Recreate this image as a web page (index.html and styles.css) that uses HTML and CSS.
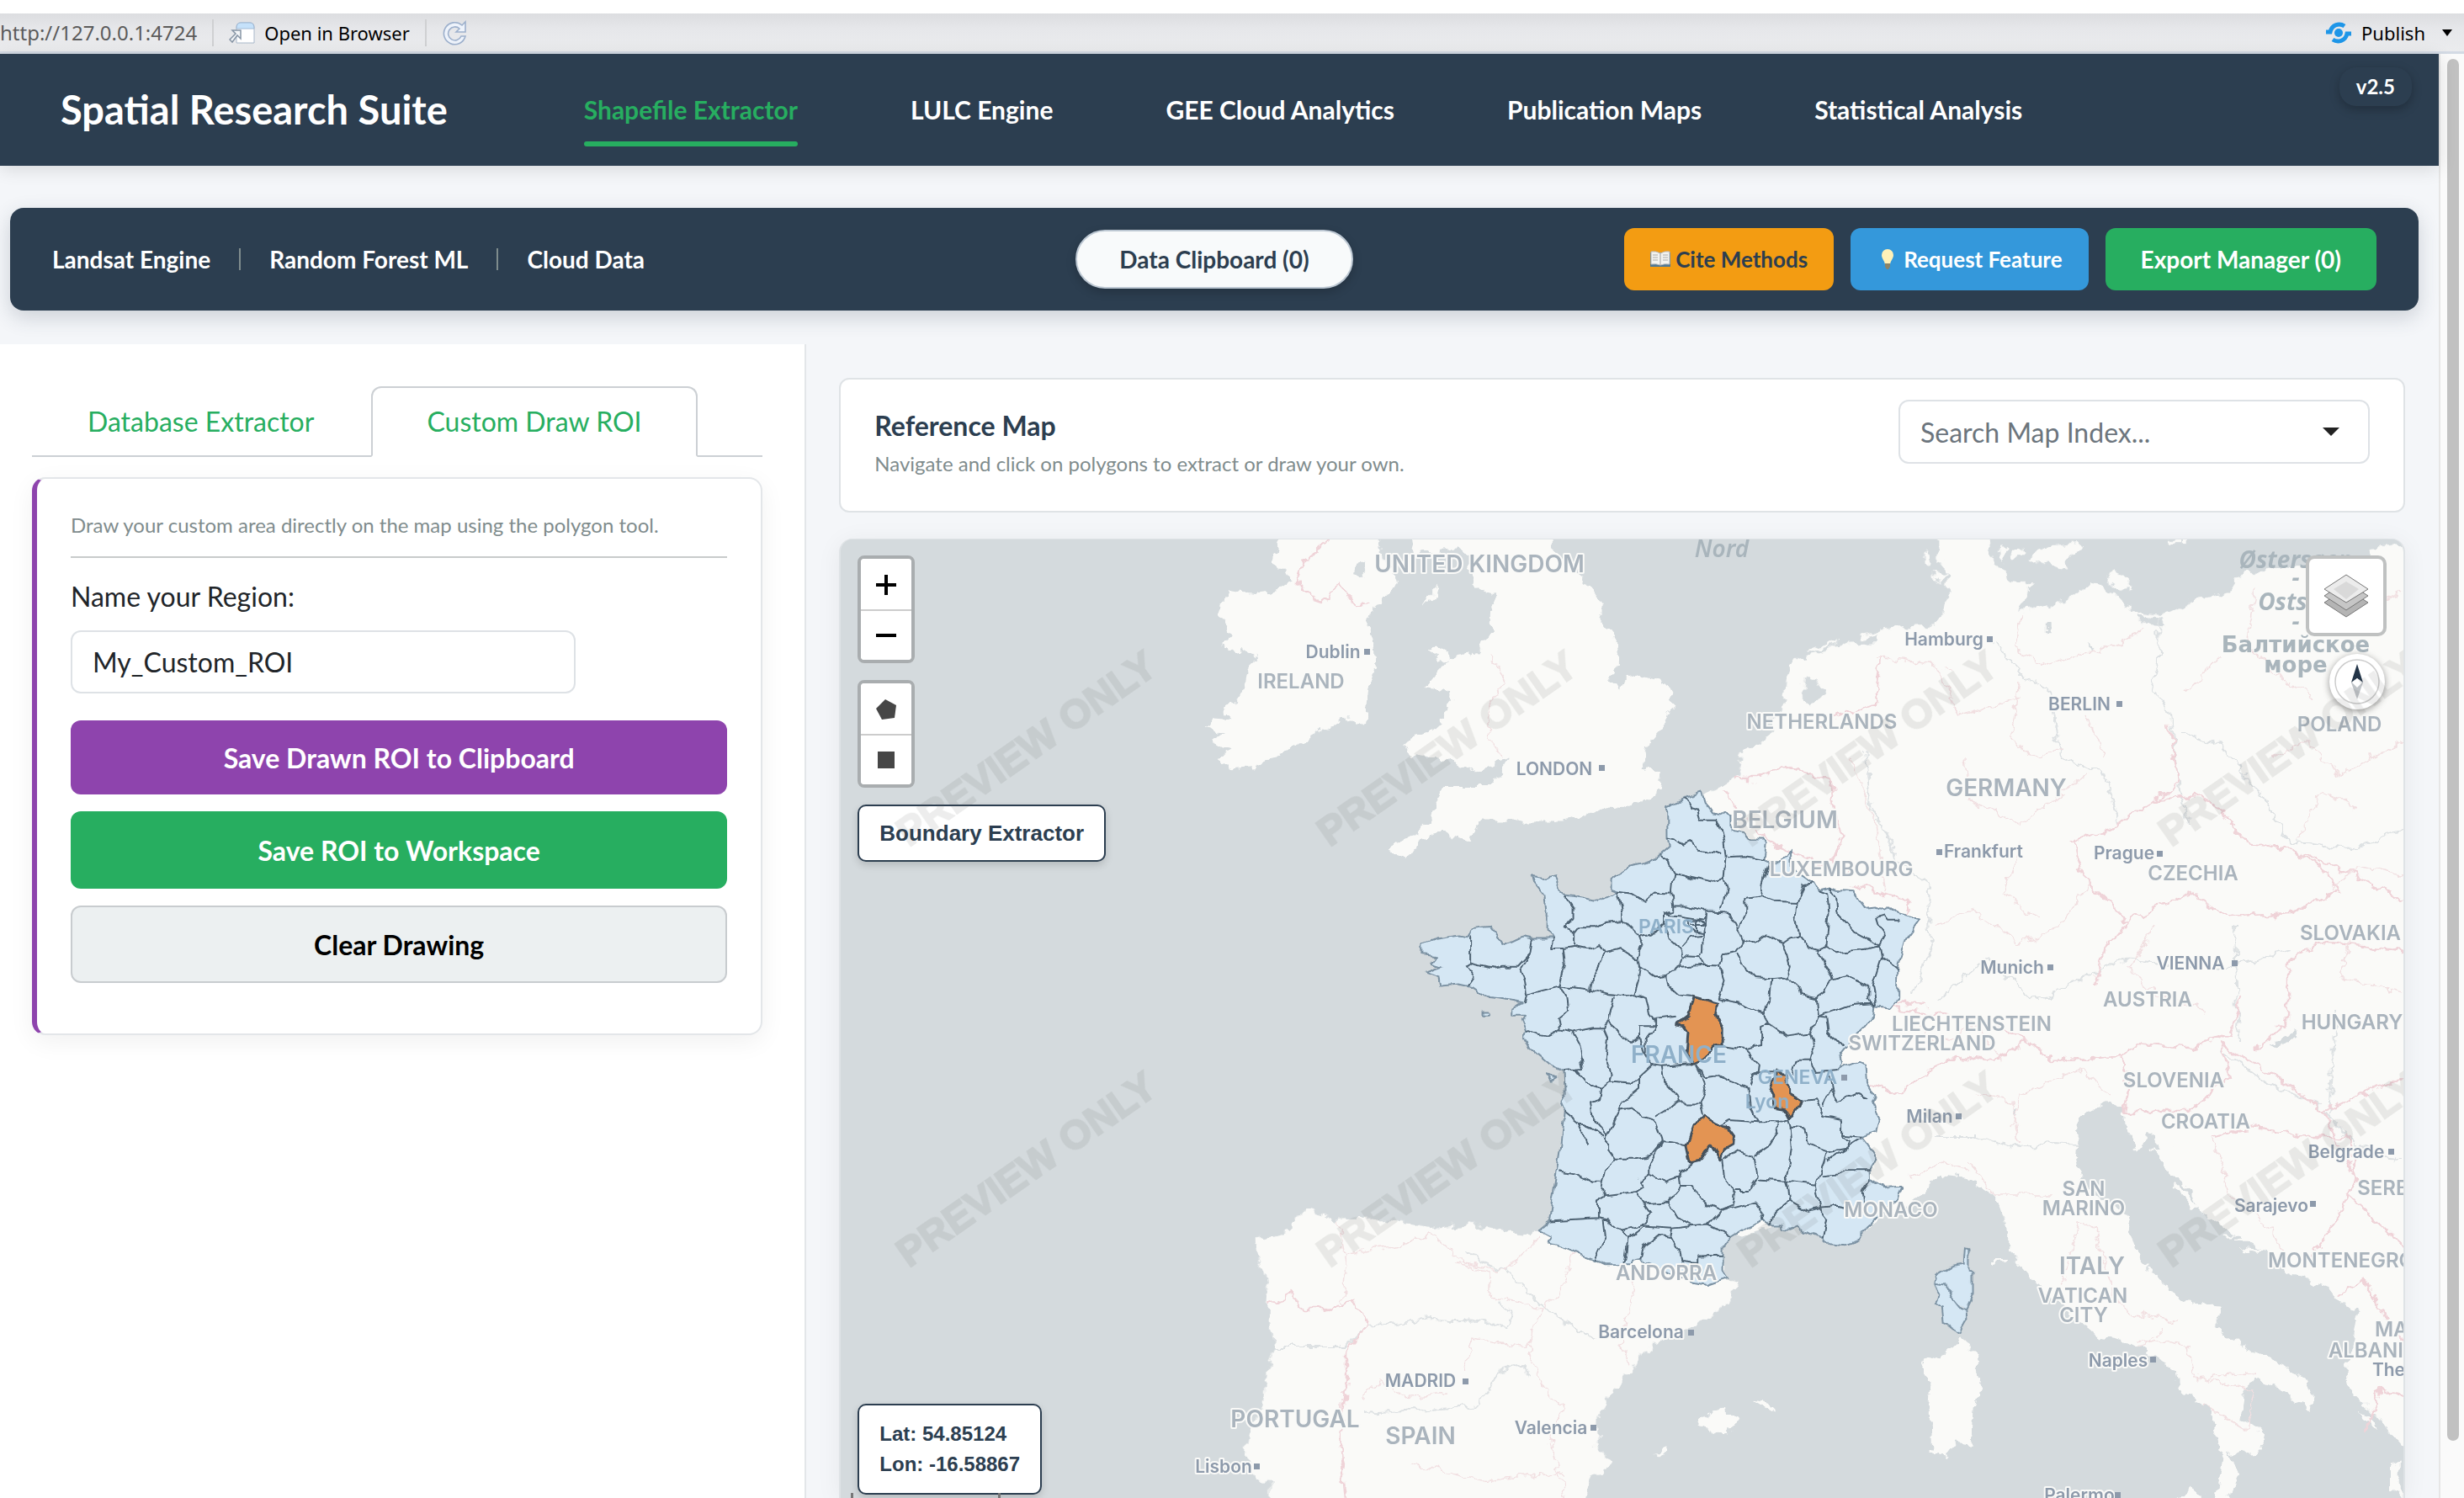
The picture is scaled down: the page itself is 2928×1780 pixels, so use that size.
FILE: index.html
```html
<!DOCTYPE html>
<html lang="en">
<head>
<meta charset="utf-8">
<title>Spatial Research Suite</title>
<link rel="stylesheet" href="styles.css">
</head>
<body>
<div class="strip"></div>
<div class="viewer-bar">
  <span class="viewer-url">http://127.0.0.1:4724</span>
  <span class="divider"></span>
  <button class="tool" type="button">
    <svg width="32" height="26" viewBox="0 0 32 26"><path d="M9 6q0-5 5-5h11q5 0 5 5v19H9V6z" fill="#fff" stroke="#a9b8ca"/><path d="M9 8q0-7 5-7h11q5 0 5 7z" fill="#c5e1fa" stroke="#9fb8d4"/><path d="M1 21l7-7-4-4h10v10l-4-4-6 8z" fill="#f4f6f8" stroke="#8795a5" stroke-width="1.5"/></svg>
    Open in Browser
  </button>
  <span class="divider"></span>
  <button class="tool" type="button" aria-label="Refresh">
    <svg width="30" height="30" viewBox="0 0 30 30"><path d="M28 2v12H17l4-4a8 8 0 1 0 2 9h5A13 13 0 1 1 24 6z" fill="#eef3fb" stroke="#9db0cc" stroke-width="1.6"/></svg>
  </button>
  <button class="tool publish" type="button">
    <svg width="34" height="26" viewBox="0 0 34 26"><circle cx="17" cy="13" r="5" fill="#1e96e8"/><path d="M2 12h5c2-9 11-11 17-7M32 14h-5c-2 9-11 11-17 7" fill="none" stroke="#1e96e8" stroke-width="5"/></svg>
    Publish
    <svg class="caret" width="12" height="8" viewBox="0 0 12 8"><path d="M0 0h12L6 8z"/></svg>
  </button>
</div>

<div class="shell">
  <div class="page">
    <header class="navbar">
      <h1>Spatial Research Suite</h1>
      <nav>
        <a class="active" href="#shapefile">Shapefile Extractor</a>
        <a href="#lulc">LULC Engine</a>
        <a href="#gee">GEE Cloud Analytics</a>
        <a href="#maps">Publication Maps</a>
        <a href="#stats">Statistical Analysis</a>
      </nav>
      <span class="version">v2.5</span>
    </header>

    <section class="ribbon">
      <div class="engines"><span>Landsat Engine</span><i></i><span>Random Forest ML</span><i></i><span>Cloud Data</span></div>
      <button class="pill" type="button">Data Clipboard (0)</button>
      <div class="actions">
        <button class="btn cite" type="button">
          <svg width="24" height="20" viewBox="0 0 24 20"><path d="M0 2h24v17H0z" fill="#4e7896"/><path d="M1 1q6-1 11 2v14q-5-2-11-1zM23 1q-6-1-11 2v14q5-2 11-1z" fill="#f3f3f0" stroke="#b9b9b9"/><path d="M3 5h6M3 8h6M3 11h6M15 5h6M15 8h6M15 11h6" stroke="#aaa"/></svg>
          Cite Methods
        </button>
        <button class="btn request" type="button">
          <svg width="18" height="26" viewBox="0 0 18 26"><path d="M9 1a7 7 0 0 1 7 7c0 4-3 6-4 11H6C5 14 2 12 2 8a7 7 0 0 1 7-7z" fill="#fff1b8"/><path d="M6 18h6v4l-2 3H8l-2-3z" fill="#8b8468"/></svg>
          Request Feature
        </button>
        <button class="btn export" type="button">Export Manager (0)</button>
      </div>
    </section>

    <main class="work">
      <aside class="sidebar">
        <div class="tabs">
          <a href="#database">Database Extractor</a>
          <a class="current" href="#draw">Custom Draw ROI</a>
        </div>
        <form class="card">
          <p class="hint">Draw your custom area directly on the map using the polygon tool.</p>
          <label for="roi">Name your Region:</label>
          <input id="roi" type="text" value="My_Custom_ROI">
          <button class="wide purple" type="button">Save Drawn ROI to Clipboard</button>
          <button class="wide green" type="button">Save ROI to Workspace</button>
          <button class="wide plain" type="button">Clear Drawing</button>
        </form>
      </aside>

      <section class="content">
        <div class="map-head">
          <div>
            <h2>Reference Map</h2>
            <p>Navigate and click on polygons to extract or draw your own.</p>
          </div>
          <div class="search">
            <input type="text" placeholder="Search Map Index..." aria-label="Search Map Index">
            <svg width="20" height="10" viewBox="0 0 20 10"><path d="M0 0h20L10 10z" fill="#222"/></svg>
          </div>
        </div>

        <div class="map">
          <svg class="tiles" viewBox="999 641 1857 1139" preserveAspectRatio="xMinYMin slice">
            <defs>
              <filter id="coast" filterUnits="userSpaceOnUse" x="980" y="620" width="1900" height="1180">
                <feTurbulence type="fractalNoise" baseFrequency="0.07" numOctaves="3" seed="4"/>
                <feDisplacementMap in="SourceGraphic" scale="16" xChannelSelector="R" yChannelSelector="G"/>
              </filter>
              <filter id="edge" filterUnits="userSpaceOnUse" x="980" y="620" width="1900" height="1180">
                <feTurbulence type="fractalNoise" baseFrequency="0.06" numOctaves="2" seed="9"/>
                <feDisplacementMap in="SourceGraphic" scale="10" xChannelSelector="R" yChannelSelector="G"/>
              </filter>
            </defs>
            <rect x="980" y="620" width="1900" height="2000" fill="#d4dadd"/>
            <g filter="url(#coast)">
              <g class="land" transform="translate(980 420) scale(.63776 .41458)">
                <path d="M858 500L1030 500 1040 590 1065 640 1050 690 1020 730 1012 770 1022 820 1027 900 1012 960 1005 1065 975 1050 935 1075 890 1110 850 1150 800 1185 755 1190 730 1160 755 1140 720 1110 745 1090 710 1070 720 1045 760 1050 740 1020 780 980 790 900 810 870 740 840 760 810 735 740 750 680 800 690 845 680 870 650 860 620 830 600z"/>
                <path d="M1145 660L1140 690 1118 720 1125 690z"/>
                <path d="M1090 500L1355 500 1360 580 1410 640 1445 710 1445 760 1465 800 1480 860 1480 900 1460 930 1485 960 1490 930 1516 922 1561 940 1581 1000 1571 1050 1536 1110 1525 1180 1556 1210 1551 1260 1486 1305 1450 1300 1420 1320 1380 1340 1280 1340 1225 1340 1200 1400 1150 1370 1110 1390 1085 1450 1050 1430 1065 1400 1100 1380 1130 1340 1135 1290 1155 1240 1240 1240 1280 1150 1215 1205 1180 1170 1090 1150 1080 1115 1130 1080 1165 1030 1170 980 1120 955 1150 900 1165 870 1220 855 1240 800 1240 740 1260 700 1225 690 1205 640 1200 590 1180 560 1100 575z"/>
                <path d="M1125 850L1155 845 1165 875 1140 890zM1345 1325L1365 1315 1380 1325 1362 1342z"/>
                <path class="water" d="M990 600L1005 595 1010 620 1000 640 988 635z"/>
              </g>
              <g class="land" transform="translate(1928 420) scale(.63776 .41458)">
                <path d="M590 560L590 490 680 490 690 600 720 650 760 660 755 700 740 740 790 730 840 700 870 650 920 690 950 740 1000 750 1060 710 1130 680 1145 640 1170 625 1280 610 1395 590 1395 555 1500 540 1500 2000 100 2000 150 1260 215 1210 220 1160 270 1100 300 1000 310 890 360 860 400 835 475 830 480 790 580 780 600 730 610 640 590 600z"/>
                <path d="M760 590L790 550 850 540 860 555 835 580 820 620 790 605zM915 620L940 640 945 670 925 680 905 655zM1020 533h30v10h-30zM700 545l15 20-5 40-8-20zM725 560l16-10 6 20-14 20z"/>
                <path d="M345 850L400 822 402 828 350 858zM440 810L525 778 526 784 445 818zM562 570L575 575 572 610 562 600zM575 625L605 630 600 655 585 650zM215 1165L245 1150 260 1180 225 1185z"/>
                <path class="water" d="M340 925L370 950 375 970 350 1020 335 990zM960 750L1005 760 1010 780 970 775zM790 770l6 0 0 36-6 0zM870 830l10 10-5 14z"/>
              </g>
              <g class="land" transform="translate(980 1200) scale(.63776 .36997)">
                <path d="M865 680L900 640 935 660 950 675 1050 670 1130 700 1200 690 1300 720 1350 700 1568 820 1700 870 1686 940 1636 1000 1526 1090 1510 1150 1490 1180 1440 1300 1440 1400 1470 1450 1430 1500 1410 1600 830 1600 830 1510 800 1510 785 1440 790 1360 815 1290 820 1200 840 1080 825 960 830 900 805 780 800 740 865 710z"/>
              </g>
              <g class="land" transform="translate(1928 1200) scale(.63776 .36997)">
                <path d="M0 -20L1500 -20 1500 1430 1450 1400 1410 1310 1355 1220 1350 1150 1370 960 1335 940 1310 890 1240 840 1200 780 1120 700 1080 650 1060 580 1010 500 990 420 985 400 975 440 960 455 940 390 935 320 905 295 850 345 845 480 860 570 940 660 965 800 1020 900 1060 945 1120 950 1105 990 1120 1050 1200 1110 1275 1190 1287 1240 1280 1290 1240 1230 1180 1180 1155 1240 1150 1310 1190 1350 1195 1420 1130 1430 1150 1490 1120 1600 1100 1600 1120 1440 1095 1280 1070 1255 1035 1215 1030 1160 955 1070 890 1050 835 980 760 860 720 780 720 720 695 600 640 540 590 530 550 610 510 640 420 740 300 690 180 740 195 900 150 960 0 700z"/>
                <path d="M630 1060L655 1090 668 1190 655 1280 650 1395 620 1385 600 1435 575 1420 570 1290 575 1200 555 1130 600 1110zM190 1275L215 1310 190 1375 140 1325zM245 1255L275 1265 275 1285zM80 1405L85 1420 60 1440zM1020 1590L1060 1540 1080 1560 1080 1590zM690 800h25v10h-25zM1375 1295L1390 1300 1405 1350 1385 1330zM1430 1460L1450 1450 1450 1560 1430 1540z"/>
                <path d="M985 450L1000 440 1060 540 1050 545zM1025 560L1040 560 1080 640 1070 645zM1010 410l12 10 8 50-14-30zM1120 720h50v6h-50zM1140 740h60v8h-60zM1150 765l60 6 0 10-60-8z"/>
                <path class="water" d="M1205 115L1255 62 1262 72 1215 122zM725 320l8-10 0 30-8-6z"/>
              </g>
              <g class="rivers">
                <path d="M2372 765L2400 800 2436 822 2450 900 2500 920 2520 980"/><path d="M2564 735L2565 780 2556 820 2580 850 2585 900 2600 980"/><path d="M2590 870L2640 885 2690 950 2720 1000 2790 1010 2856 985"/><path d="M2215 895L2225 960 2260 1030 2290 1050 2295 1120 2275 1180"/><path d="M2300 1350L2350 1350 2400 1365 2440 1358 2470 1360"/><path d="M1627 1575L1700 1568 1760 1570 1790 1580 1800 1560 1780 1545"/><path d="M1740 1490L1790 1510 1840 1560 1895 1590"/><path d="M1515 1600L1600 1600 1625 1575"/><path d="M1620 1680L1700 1675 1760 1670 1780 1630 1810 1620 1820 1640"/><path d="M2640 1250L2700 1290 2750 1310 2800 1360 2850 1380"/><path d="M2300 1190L2360 1140 2420 1190 2520 1140 2640 1150 2720 1130"/><path d="M2656 1100L2660 1240M2769 1330L2775 1200"/>
              </g>
              <g class="borders">
                <path class="strong" d="M1575 641L1550 670 1540 690 1560 710 1578 716 1590 692 1610 720 1626 718"/><path class="strong" d="M1508 1550L1535 1538 1545 1555 1575 1555 1610 1548 1625 1575 1600 1605 1600 1640 1592 1720 1600 1780"/><path class="strong" d="M2060 925L2090 925 2120 910 2150 920 2175 925 2180 960 2190 1000 2175 1020 2200 1040"/><path class="strong" d="M2160 860L2230 835 2235 780"/><path class="strong" d="M2050 940L2085 985 2120 1010 2170 1030 2185 1000"/><path class="strong" d="M2200 1050L2230 1060 2270 1070 2250 1130 2225 1190 2290 1195"/><path class="strong" d="M2577 860L2590 930 2560 950 2510 985 2460 1000 2480 1050 2530 1095 2500 1130 2490 1170"/><path class="strong" d="M2560 950L2620 945 2670 1000 2720 1010 2760 1030 2780 1060 2720 1085 2650 1090 2600 1060 2530 1095"/><path class="strong" d="M2225 1190L2260 1200 2330 1210 2400 1230 2440 1260 2520 1255 2540 1240 2600 1245 2650 1230 2665 1180"/><path class="strong" d="M2220 1290L2260 1300 2290 1270 2330 1255 2370 1260 2410 1235"/><path class="strong" d="M2520 1255L2530 1290 2525 1320 2600 1320 2650 1280 2640 1240"/><path class="strong" d="M2630 1350L2680 1340 2740 1350 2790 1350 2800 1400 2780 1440 2760 1480 2730 1500"/><path class="strong" d="M2640 1240L2720 1290 2760 1320 2856 1280M2760 1320L2800 1400 2790 1420 2856 1480"/><path class="strong" d="M2780 1540L2810 1520 2830 1560 2856 1600M2810 1700L2830 1650 2856 1660"/><path class="strong" d="M2720 1010L2780 1030 2856 1070M2680 1250L2720 1210 2720 1140 2760 1120 2856 1130"/>
                <path d="M1770 780L1790 810 1768 840 1770 880 1785 900"/><path d="M1600 1490L1670 1480 1700 1465 1740 1500 1790 1510 1830 1470"/><path d="M1590 1450L1600 1500 1595 1550"/><path d="M1730 1500L1770 1510 1770 1540 1830 1555 1815 1600 1750 1590 1740 1630"/><path d="M1875 1480L1850 1540 1830 1555M1942 1520L1925 1600 1940 1620M1815 1600L1840 1660 1860 1670 1840 1700 1860 1780M1680 1740L1760 1760 1860 1750M1620 1660L1640 1640 1670 1660 1720 1655"/><path d="M2305 790L2320 800M2400 730L2395 770 2430 790 2500 770 2550 750M2230 780L2300 790 2330 850 2400 830M2200 900L2230 980 2240 1060M2335 900L2340 950 2400 980 2480 920M2400 810L2390 880 2420 900 2450 890"/><path d="M2480 850L2500 900M2600 820L2640 780M2680 700L2670 760 2700 800 2750 830M2700 900L2740 880 2780 920 2856 880M2730 1000L2760 940 2800 960"/><path d="M2300 1100L2340 1080 2400 1120 2450 1100 2480 1050M2560 1100L2530 1150 2560 1180 2620 1200M2400 1000L2380 1060 2420 1090"/><path d="M2270 1210L2300 1240 2350 1220 2380 1260M2350 1300L2390 1310 2400 1360M2270 1400L2310 1380 2340 1390M2390 1340L2400 1300 2470 1270 2510 1300M2340 1380L2370 1420 2440 1420"/><path d="M2450 1530L2470 1450 2490 1460 2500 1500 2510 1540 2530 1560 2590 1570M2540 1590L2600 1600 2610 1640 2680 1630M2540 1600L2570 1580M2620 1640L2680 1650 2670 1700 2620 1670"/><path d="M2630 1350L2650 1420 2700 1460 2720 1500M2800 1100L2780 1160 2856 1180M2856 700L2830 720M2770 1060L2800 1030 2856 1040"/>
              </g>
            </g>
            <g filter="url(#edge)">
              <g class="depts" transform="translate(1640 900) scale(.44643 .41454)">
                <path class="fr" d="M764 138L812 116 858 100 866 130 885 160 900 165 922 155 935 170 935 210 970 215 985 235 1020 235 1030 245 1025 292 1035 300 1065 300 1085 290 1095 265 1097 320 1120 335 1155 360 1165 378 1195 370 1215 378 1260 382 1275 410 1290 432 1320 428 1345 438 1362 430 1382 452 1436 467 1400 520 1378 605 1378 690 1355 718 1318 712 1315 740 1285 780 1255 810 1225 850 1230 880 1222 895 1240 885 1270 873 1293 880 1297 930 1318 970 1310 990 1330 1040 1322 1075 1280 1090 1295 1110 1320 1150 1305 1180 1306 1210 1345 1235 1386 1232 1365 1280 1310 1330 1280 1360 1280 1385 1240 1400 1190 1395 1180 1380 1130 1360 1115 1345 1095 1355 1070 1353 1068 1340 1030 1340 1020 1328 970 1350 932 1375 913 1405 913 1470 925 1490 870 1510 820 1500 780 1480 740 1465 700 1450 690 1435 670 1440 670 1455 600 1455 570 1440 535 1425 490 1405 450 1390 455 1375 420 1355 450 1328 470 1185 478 1130 490 1015 478 985 490 960 487 900 450 880 400 835 385 800 390 785 378 755 385 740 350 740 350 720 380 705 330 695 290 690 250 660 210 650 160 655 155 630 120 617 165 600 135 590 150 570 115 565 115 535 150 520 215 510 235 515 245 490 290 485 330 540 380 515 405 520 460 520 445 495 445 450 440 400 410 360 405 340 430 345 465 338 478 380 495 395 540 402 580 412 632 385 615 378 615 350 665 312 720 298 745 278 770 255 765 228z"/>
                <path d="M812 116L825 145 845 152 852 178 892 178 905 200 915 240 920 285M765 228L785 232 808 250 828 240 848 265 885 270 910 278M925 285L970 283 1025 292M745 278L765 295 780 330 840 345 880 355 915 342 920 285M780 330L775 385 780 428 820 428 860 440 918 442M915 342L922 380 907 435M632 385L670 390 705 412 735 385 775 388M632 385L648 468 600 472 575 488 530 488M490 395L512 430 512 455 490 490 520 502 530 488M520 502L520 540M648 468L690 512 720 505 755 475 755 450 780 440 780 428M755 475L770 520 800 548 805 570M755 450L800 455 860 465 867 445M867 445L862 510 830 515 805 545M820 470L845 465 865 480 860 505 835 500 820 485zM825 480h36M840 465v40M862 510L860 560 850 575 805 572M918 442L945 475 965 525 945 558 912 565 905 597 860 595 850 575M950 495L975 450 975 405 1015 398M1015 398L1018 360 1035 300M1015 398L1050 412 1110 415M1110 415L1125 365 1155 360M965 525L1000 535 1030 510 1075 530 1095 515 1115 510 1105 470 1110 415M1165 380L1190 390 1195 450 1188 545M1195 370L1212 400 1215 445 1270 505 1330 540M1115 510L1140 545 1170 555 1188 545 1215 558 1300 548 1330 540M1330 540L1335 570 1378 605M1330 540L1345 510 1325 480 1320 455 1345 450 1355 465 1378 465M1335 570L1310 655 1320 712M1170 555L1185 600 1205 635 1240 625 1300 655 1300 695 1318 712M1075 530L1085 560 1095 600 1085 630 1040 635 1000 632 970 600 950 560M1085 630L1115 660 1120 680 1160 690 1185 670 1205 635M1160 690L1165 742 1225 720 1250 710 1315 705M1040 635L1035 700 1020 732 1030 762 1080 800 1145 790 1165 742M905 597L915 640 900 690 950 700 985 720 1020 732M1165 742L1190 745 1195 790 1230 830M1145 790L1155 850 1150 870 1105 870 1095 910M1150 870L1165 900 1220 895M1030 762L1015 770 1015 825 970 835 912 825M970 835L1010 880 1008 900 990 910M760 625L765 655 790 680 830 685M860 595L800 600 760 625 730 628 690 600 685 570 700 540 690 512M805 572L800 600M520 540L555 548 585 535 598 560 640 548 685 580M598 560L585 590 565 630 560 665 610 680 640 685 675 678 685 640 690 600M405 520L400 560 375 605 385 640 390 680M240 515L240 590 300 605 325 600 365 600 400 560M240 590L225 597 250 632 235 655M460 520L455 545 490 545 495 600 480 655 390 680 385 705M490 545L520 540M480 655L560 665M480 655L495 685 500 725 475 745 482 780 445 800 420 795 390 785M482 780L510 788 570 775 595 775 608 760 615 720 625 690M510 788L530 830 540 895 487 900M595 775L605 800 600 860 615 910 610 930M525 898L550 930 590 945 610 930M608 760L645 795 665 820 690 800 690 770M690 800L700 845 720 880M690 770L735 770 735 752 790 745M675 678L710 690 720 740 735 760M735 770L705 810 705 850M720 880L690 910 690 950 650 985 640 1010 605 1080M610 930L670 935 690 920M590 945L585 980 560 990 565 1030 605 1080M720 880L750 885 830 878M750 885L755 930 790 970 795 990 735 1030M838 878L860 925 865 950 850 990 795 990M850 990L858 1030M865 915L900 910 935 930 980 950 985 1000 1005 1045 930 1040 905 1055M838 878L865 915M985 940L995 905 1050 905M640 1010L665 1005 700 1030 730 1040 750 1100 720 1140 680 1150 625 1150 605 1120 605 1080M750 1100L785 1105 815 1110M750 1100L715 1170 715 1195 760 1215 800 1200M625 1150L600 1180 590 1240 605 1255M478 1185L520 1195 565 1220 590 1220M450 1328L580 1320 580 1270 605 1255 680 1245 700 1230 690 1215 715 1195M580 1320L605 1325 640 1355 700 1340 720 1310 700 1280 680 1245M595 1325L600 1370 570 1440M640 1355L660 1380 650 1455M690 1435L700 1400 740 1370 775 1375 780 1350M660 1380L700 1345 780 1350 820 1345 870 1340M700 1280L765 1275 800 1230 830 1230 870 1280 910 1300M765 1275L790 1320 830 1340M800 1230L795 1190 830 1160M910 1150L915 1200 945 1250 940 1285 905 1300 870 1340 935 1370M910 1300L1000 1275 1025 1310 1020 1328M915 1150L950 1125 995 1140 1005 1200 980 1240 945 1240M775 1375L800 1420 805 1445 845 1450 845 1432 913 1430M1055 1045L1060 1075 1040 1110 1000 1140M1005 1045L1060 1045 1085 1035 1090 1060 1095 1120 1080 1215M1005 1210L1080 1215 1090 1270 1050 1310 1030 1340M1080 1215L1120 1220 1160 1225 1170 1290 1190 1320 1180 1380M1090 1270L1140 1300 1170 1290M1090 1060L1130 1065 1140 1110 1190 1130 1175 1180 1160 1225M1190 1130L1245 1120 1250 1100 1230 1090 1230 1040 1180 1030 1160 980 1120 985M1190 1155L1280 1095M1175 1200L1220 1195 1240 1180 1305 1180M1200 950L1180 1000M1195 910L1200 950 1220 985 1265 965 1297 980M1230 1085L1280 1090M1170 1290L1215 1285 1290 1300 1285 1245 1306 1210M490 1015L530 1050 550 1110M530 1050L600 1085"/>
                <path class="pick" d="M833 686L865 695 900 705 895 735 912 775 912 822 888 832 865 860 830 878 815 855 820 790 805 768 790 765 820 740 830 710zM1050 902L1078 905 1080 925 1090 940 1090 965 1125 988 1120 1005 1100 1010 1088 1030 1078 1010 1050 1005 1050 970 1038 945zM865 1030L885 1042 910 1058 925 1060 942 1085 940 1110 915 1125 905 1155 880 1110 855 1150 825 1158 815 1112 835 1050 860 1040z"/>
                <path class="fr" d="M270 730h18v10h-18zM445 905l24 12-10 6z"/>
              </g>
              <g class="depts" transform="translate(1928 1200) scale(.63776 .36997)">
                <path class="fr" d="M638 765L645 768 645 840 653 850 653 915 640 960 642 995 628 1038 600 1010 597 960 583 945 590 915 582 880 585 850 615 820 636 815zM582 880L605 885 612 915 630 955 640 960"/>
              </g>
            </g>
            <g class="country">
              <text x="1758" y="680" class="l">UNITED KINGDOM</text><text x="1546" y="818">IRELAND</text><text x="2165" y="866">NETHERLANDS</text><text x="2780" y="869">POLAND</text><text x="2384" y="946" class="l">GERMANY</text><text x="2121" y="984" class="l">BELGIUM</text><text x="2606" y="1046">CZECHIA</text><text x="2188" y="1041">LUXEMBOURG</text><text x="2793" y="1117">SLOVAKIA</text><text x="2552" y="1196">AUSTRIA</text><text x="2343" y="1225">LIECHTENSTEIN</text><text x="2284" y="1248">SWITZERLAND</text><text x="2795" y="1223">HUNGARY</text><text x="2583" y="1292">SLOVENIA</text><text x="2621" y="1341">CROATIA</text><text x="2844" y="1420">SERBIA</text><text x="2476" y="1421">SAN</text><text x="2476" y="1444">MARINO</text><text x="2247" y="1446">MONACO</text><text x="2486" y="1514" class="l">ITALY</text><text x="2475" y="1548">VATICAN</text><text x="2476" y="1571">CITY</text><text x="2782" y="1506">MONTENEGRO</text><text x="2866" y="1588">MACED</text><text x="2820" y="1613">ALBANIA</text><text x="1539" y="1696" class="l">PORTUGAL</text><text x="1688" y="1716" class="l">SPAIN</text><text x="1980" y="1521">ANDORRA</text>
              <g class="under"><text x="1995" y="1263" class="l">FRANCE</text></g>
            </g>
            <g class="city">
              <text x="1584" y="782">Dublin</text><text x="1847" y="921">LONDON</text><text x="2310" y="767">Hamburg</text><text x="2471" y="844">BERLIN</text><text x="2357" y="1019">Frankfurt</text><text x="2524" y="1021">Prague</text><text x="2391" y="1157">Munich</text><text x="2603" y="1152">VIENNA</text><text x="2293" y="1334">Milan</text><text x="2788" y="1376">Belgrade</text><text x="2699" y="1440">Sarajevo</text><text x="2517" y="1624">Naples</text><text x="2471" y="1784">Palermo</text><text x="1688" y="1648">MADRID</text><text x="1843" y="1704">Valencia</text><text x="1454" y="1750">Lisbon</text><text x="1950" y="1590">Barcelona</text><text x="2850" y="1635">Thess</text>
              <g class="under"><text x="1980" y="1109">PARIS</text><text x="2100" y="1317">Lyon</text><text x="2136" y="1288">GENEVA</text></g>
              <path d="M1621 771h7v7h-7zM1900 909h7v7h-7zM2361 756h7v7h-7zM2515 833h7v7h-7zM2301 1009h7v7h-7zM2563 1011h7v7h-7zM2433 1146h7v7h-7zM2652 1141h7v7h-7zM2324 1323h7v7h-7zM2838 1365h7v7h-7zM2745 1427h7v7h-7zM2555 1612h7v7h-7zM2513 1773h7v7h-7zM1738 1638h7v7h-7zM1890 1693h7v7h-7zM1490 1739h7v7h-7zM2006 1580h7v7h-7zM2188 1277h7v7h-7z"/>
            </g>
            <g class="sea"><text class="north" x="2046" y="662">Nord</text><text x="2728" y="675">Østersøen</text><text x="2728" y="696">-</text><text x="2728" y="725">Ostsee</text><text x="2728" y="748">-</text><text class="cyr" x="2728" y="775">Балтийское</text><text class="cyr" x="2728" y="799">море</text></g>
          </svg>

          <div class="zoomer"><button type="button" aria-label="Zoom in"><svg width="26" height="26" viewBox="0 0 26 26"><path d="M13 1v24M1 13h24" stroke="#000" stroke-width="4"/></svg></button><button type="button" aria-label="Zoom out"><svg width="26" height="26" viewBox="0 0 26 26"><path d="M1 13h24" stroke="#000" stroke-width="4"/></svg></button></div>
          <div class="zoomer draw"><button type="button" aria-label="Draw polygon"><svg width="26" height="26" viewBox="0 0 26 26"><path d="M12 1l13 7-2 15-15 2L1 12z" fill="#464646"/></svg></button><button type="button" aria-label="Draw rectangle"><svg width="26" height="26" viewBox="0 0 26 26"><path d="M3 3h20v20H3z" fill="#464646"/></svg></button></div>
          <div class="tag">Boundary Extractor</div>
          <div class="tag coords">Lat: 54.85124<br>Lon: -16.58867</div>
          <div class="scale"></div>
          <button class="layers" type="button" aria-label="Layers"><svg width="54" height="52" viewBox="0 0 54 52"><g stroke="#777" stroke-width="1"><path d="M1 34L27 17 53 34 27 51z" fill="#b4b4b4"/><path d="M1 26L27 9 53 26 27 43z" fill="#c6c6c6"/><path d="M1 18L27 1 53 18 27 34z" fill="#ececec"/></g><path d="M12 18L27 9 42 18 27 30z" fill="#d9d9d9"/></svg></button>
          <div class="compass"><svg width="66" height="66" viewBox="0 0 66 66"><circle cx="33" cy="33" r="26" fill="#fff" stroke="#ccc" stroke-width="1.5"/><path d="M33 12l7 22-7-5-7 5z" fill="#233548"/><path d="M33 54l7-20-7-5-7 5z" fill="#bfc3c7"/><path d="M33 29l6 5-6 6-6-6z" fill="#fff"/></svg></div>
          <svg class="watermark" viewBox="999 641 1857 1139" preserveAspectRatio="xMinYMin slice">
            <g><text transform="translate(1080 1007) rotate(-35)">PREVIEW ONLY</text><text transform="translate(1580 1007) rotate(-35)">PREVIEW ONLY</text><text transform="translate(2080 1007) rotate(-35)">PREVIEW ONLY</text><text transform="translate(2580 1007) rotate(-35)">PREVIEW ONLY</text><text transform="translate(1080 1507) rotate(-35)">PREVIEW ONLY</text><text transform="translate(1580 1507) rotate(-35)">PREVIEW ONLY</text><text transform="translate(2080 1507) rotate(-35)">PREVIEW ONLY</text><text transform="translate(2580 1507) rotate(-35)">PREVIEW ONLY</text></g>
          </svg>
        </div>
      </section>
    </main>
  </div>
  <div class="scrollbar"><div class="thumb"></div></div>
</div>
</body>
</html>
```
FILE: styles.css
```css
* { box-sizing: border-box; }
body { margin: 0; height: 100vh; overflow: hidden; display: flex; flex-direction: column; background: #fff; font-family: Lato, "Liberation Sans", sans-serif; font-size: 32px; color: #212529; }
button, input { font: inherit; color: inherit; }
h1, h2, p { margin: 0; }
a { text-decoration: none; }
svg { flex: none; }

.strip { flex: 0 0 16px; }
.viewer-bar { flex: 0 0 48px; display: flex; align-items: center; gap: 18px; padding-right: 14px; background: linear-gradient(#dcdde0, #e6e7ea 40%, #ebecee); border-bottom: 3px solid #d3dae4; font-family: "Noto Sans", "Open Sans", sans-serif; font-size: 22px; }
.viewer-url { color: #5b5b5b; font-size: 24px; }
.divider { width: 2px; height: 32px; background: #cfd0d2; }
.tool { display: flex; align-items: center; gap: 10px; padding: 0; border: 0; background: none; color: #000; }
.publish { margin-left: auto; }
.caret { margin-left: 10px; }

.shell { flex: 1; min-height: 0; display: flex; }
.page { flex: 1; min-width: 0; display: flex; flex-direction: column; background: #f4f6f9; }
.scrollbar { flex: 0 0 30px; padding: 6px 6px 0 8px; background: #fafafa; border-left: 2px solid #e6e6e6; }
.thumb { height: 96%; border-radius: 8px; background: #c1c1c1; }

.navbar { flex: none; position: relative; display: flex; align-items: center; gap: 162px; height: 133px; padding: 0 0 2px 72px; background: #2c3e50; color: #fff; box-shadow: 0 4px 20px rgba(0,0,0,.12); }
.navbar h1 { font-size: 47px; font-weight: 700; line-height: 52px; }
.navbar nav { display: flex; gap: 134px; font-weight: 700; font-size: 30px; }
.navbar a { position: relative; color: #fff; line-height: 40px; }
.navbar a.active { color: #27ae60; }
.navbar a.active::after { content: ""; position: absolute; left: 0; right: 0; bottom: -24px; height: 6px; border-radius: 3px; background: #27ae60; }
.version { position: absolute; top: 16px; right: 32px; padding: 8px 20px; border-radius: 20px; background: #2c3e50; font-weight: 700; font-size: 24px; line-height: 30px; box-shadow: 0 4px 12px rgba(0,0,0,.25); }

.ribbon { flex: none; display: grid; grid-template-columns: 1fr auto 1fr; align-items: center; margin: 50px 24px 40px 12px; padding: 24px 50px; border-radius: 16px; background: #2c3e50; box-shadow: 0 8px 24px rgba(44,62,80,.2); color: #fff; font-weight: 700; font-size: 28px; }
.engines { display: flex; align-items: center; gap: 34px; }
.engines i { width: 2px; height: 26px; background: #7f8c8d; }
.pill { height: 70px; padding: 0 50px; border: 2px solid #bdc8d3; border-radius: 35px; background: #f8fafb; color: #2c3e50; font-weight: 700; box-shadow: 0 4px 12px rgba(0,0,0,.2); }
.actions { display: flex; justify-content: flex-end; gap: 20px; }
.btn { display: flex; align-items: center; gap: 6px; height: 74px; padding: 0 31px; border: 0; border-radius: 12px; font-weight: 700; font-size: 26px; white-space: nowrap; }
.cite { background: #f39c12; color: #2c3e50; }
.request { background: #3498db; color: #fff; gap: 10px; }
.request svg { margin-left: 4px; }
.export { background: #27ae60; color: #fff; padding: 0 42px; font-size: 28px; }

.work { flex: 1; min-height: 0; display: flex; }
.sidebar { flex: 0 0 calc(33% + 2px); padding: 50px 50px 0 38px; background: #fff; border-right: 2px solid #e3e6e9; }
.tabs { display: flex; gap: 2px; height: 84px; border-bottom: 2px solid #ccd0d4; }
.tabs a { height: 84px; padding: 0 64px; line-height: 80px; color: #27ae60; border: 2px solid transparent; white-space: nowrap; }
.tabs a.current { border-color: #ccd0d4; border-bottom-color: #fff; border-radius: 12px 12px 0 0; background: #fff; }
.card { display: flex; flex-direction: column; margin-top: 24px; padding: 36px 40px 60px; border: 2px solid #e3e6e9; border-left: 6px solid #8e44ad; border-radius: 16px; background: #fff; box-shadow: 0 8px 30px rgba(0,0,0,.06); }
.hint { padding-bottom: 18px; border-bottom: 2px solid #c8cbcb; color: #7f8c8d; font-size: 24px; line-height: 38px; }
.card label { margin: 22px 0 16px; line-height: 48px; }
.card input { width: 600px; height: 75px; padding: 0 24px; border: 2px solid #dee2e6; border-radius: 12px; background: #fff; margin-bottom: 32px; }
.wide { height: 92px; margin-bottom: 20px; border: 0; border-radius: 12px; color: #fff; font-weight: 700; }
.wide:last-child { margin-bottom: 0; }
.purple { height: 88px; background: #8e44ad; }
.green { background: #27ae60; }
.plain { background: #ecf0f1; color: #000; border: 2px solid #c8cccf; }

.content { flex: 1; min-width: 0; display: flex; flex-direction: column; gap: 31px; padding: 40px 40px 0 39px; }
.map-head { display: flex; justify-content: space-between; align-items: flex-start; height: 160px; padding: 24px 40px; border: 2px solid #dfe3e6; border-radius: 12px; background: #fff; }
.map-head h2 { margin-top: 8px; color: #2c3e50; font-size: 32px; line-height: 46px; }
.map-head p { color: #7f8c8d; font-size: 24px; line-height: 44px; }
.search { display: flex; align-items: center; width: 560px; height: 76px; padding-right: 34px; border: 2px solid #dee2e6; border-radius: 12px; }
.search input { flex: 1; min-width: 0; height: 70px; padding: 0 24px; border: 0; background: none; outline: 0; }
.search input::placeholder { color: #6c757d; opacity: 1; }

.map { flex: 1; min-height: 0; position: relative; overflow: hidden; border: 2px solid #dfe3e6; border-width: 1px 2px 0; border-radius: 16px 16px 0 0; background: #d4dadd; box-shadow: 0 4px 30px rgba(0,0,0,.06); }
.tiles, .watermark { position: absolute; inset: 0; width: 100%; height: 100%; }
.land path { fill: #fafaf8; }
.land .water { fill: #d4dadd; }
.borders path { fill: none; stroke: #f1dfe1; stroke-width: 1.5px; }
.borders .strong { stroke: #efd3d8; stroke-width: 2.5px; }
.rivers path { fill: none; stroke: #dde1e3; stroke-width: 2px; }
.depts path { fill: none; stroke: #4f6373; stroke-width: 2px; vector-effect: non-scaling-stroke; stroke-linejoin: round; }
.depts .fr { fill: #d5e7f4; stroke: #7c92a3; }
.depts .pick { fill: #e39452; stroke: #44515c; stroke-width: 3px; }
.tiles text { text-anchor: middle; paint-order: stroke; stroke: #fafaf8; stroke-width: 4px; stroke-linejoin: round; }
.country { font: 600 24px Inter, sans-serif; fill: #aab4bd; }
.country .l { font-size: 28px; }
.city { font: 600 21px Inter, sans-serif; fill: #8d9aab; }
.tiles .under text { stroke: none; fill: #8fb0c9; }
.city .under { font-size: 23px; }
.sea { font: italic 700 28px "Noto Sans", sans-serif; fill: #a9b5bc; }
.tiles .sea text { stroke: none; }
.sea .north { font-weight: 600; }
.sea .cyr { font: 700 26px "DejaVu Sans", sans-serif; }
.watermark { pointer-events: none; z-index: 2; font: 700 48px "Liberation Sans", Arial, sans-serif; }
.watermark g { fill: #5a5f5a; stroke: #5a5f5a; stroke-width: 2px; opacity: .11; }

.zoomer { position: absolute; left: 20px; top: 19px; border: 4px solid #a9adaf; border-radius: 8px; background: #fff; overflow: hidden; }
.zoomer button { display: flex; align-items: center; justify-content: center; width: 60px; height: 60px; padding: 2px 0 0; border: 0; background: #fff; }
.zoomer button + button { padding: 0; border-top: 2px solid #ccc; }
.draw { top: 167px; }
.tag { position: absolute; left: 20px; top: 315px; padding: 11px 24px; border: 2px solid #2c3e50; border-radius: 10px; background: #fff; color: #2c3e50; font: 700 26px/42px "Liberation Sans", Arial, sans-serif; box-shadow: 0 4px 10px rgba(0,0,0,.15); white-space: nowrap; }
.coords { top: auto; bottom: 4px; padding: 16px 24px; font-size: 24px; line-height: 36px; }
.scale { position: absolute; left: 12px; bottom: 0; width: 178px; height: 6px; border: solid #777; border-width: 0 3px; }
.layers { position: absolute; right: 20px; top: 19px; display: flex; align-items: center; justify-content: center; width: 96px; height: 96px; padding: 0; border: 4px solid #bfc1c1; border-radius: 10px; background: #fff; }
.compass { position: absolute; right: 22px; top: 136px; display: flex; border-radius: 50%; background: #fff; box-shadow: 0 2px 8px rgba(0,0,0,.4); }
```
